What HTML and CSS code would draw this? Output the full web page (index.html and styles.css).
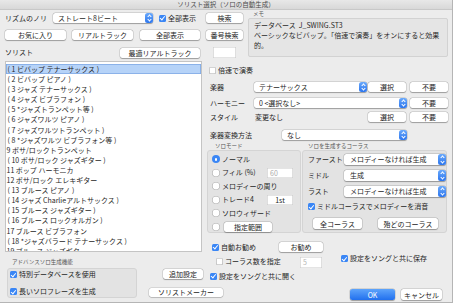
FILE: index.html
```html
<!DOCTYPE html>
<html lang="ja">
<head>
    <meta charset="UTF-8">
    <meta name="viewport" content="width=device-width, initial-scale=1.0">
    <title>ソリスト選択（ソロの自動生成）</title>
    <link rel="stylesheet" href="styles.css">
</head>
<body>
<div class="dlg">
    <div class="titlebar">ソリスト選択（ソロの自動生成）</div>

    <div class="top">
        <div class="top-left">
            <div class="row r1">
                <span class="rhythm-lbl">リズムのノリ</span>
                <div class="sel rhythm-sel"><span>ストレート8ビート</span><i class="step"></i></div>
                <label class="chk all-chk"><i class="cb on"></i>全部表示</label>
                <button class="btn b-search">検索</button>
            </div>
            <div class="row r2">
                <button class="btn b-fav">お気に入り</button>
                <button class="btn b-rt">リアルトラック</button>
                <button class="btn b-all">全部表示</button>
                <button class="btn b-num">番号検索</button>
            </div>
            <div class="row r3">
                <span class="soloist-lbl">ソリスト</span>
                <button class="btn b-best">最適リアルトラック</button>
                <span class="fld num-fld"></span>
            </div>
        </div>
        <div class="memo">
            <div class="small-lbl">メモ</div>
            <div class="memo-box">データベース&nbsp;&nbsp;J_SWING.ST3<br>ベーシックなビバップ。「倍速で演奏」をオンにすると効果<br>的。</div>
        </div>
    </div>

    <div class="mid">
        <ul class="list">
            <li class="p on">( 1 ビバップ テナーサックス )</li>
            <li class="p">( 2 ビバップ ピアノ )</li>
            <li class="p">( 3 ジャズ テナーサックス )</li>
            <li class="p">( 4 ジャズ ビブラフォン )</li>
            <li class="p">( 5 *ジャズトランペット等 )</li>
            <li class="p">( 6 ジャズワルツ ピアノ )</li>
            <li class="p">( 7 ジャズワルツトランペット )</li>
            <li class="p">( 8 *ジャズワルツ ビブラフォン等 )</li>
            <li>9 ボサ/ロックトランペット</li>
            <li class="p">( 10 ボサ/ロック ジャズギター )</li>
            <li>11 ポップ ハーモニカ</li>
            <li>12 ボサ/ロック エレキギター</li>
            <li class="p">( 13 ブルース ピアノ )</li>
            <li class="p">( 14 ジャズ Charlieアルトサックス )</li>
            <li class="p">( 15 ブルース ジャズギター )</li>
            <li class="p">( 16 ブルース ロックオルガン )</li>
            <li>17 ブルース ビブラフォン</li>
            <li class="p">( 18 *ジャズバラード テナーサックス )</li>
            <li>19 ブルース ジャズギター</li>
        </ul>

        <div class="rp">
            <label class="chk dbl"><i class="cb"></i>倍速で演奏</label>

            <div class="frow inst">
                <span class="flbl">楽器</span>
                <div class="sel inst-sel"><span>テナーサックス</span><i class="step"></i></div>
                <button class="btn b-pick">選択</button>
                <button class="btn b-none">不要</button>
            </div>
            <div class="frow harm">
                <span class="flbl">ハーモニー</span>
                <div class="sel harm-sel"><span>0 &lt;選択なし&gt;</span><i class="step"></i></div>
                <button class="btn b-none">不要</button>
            </div>
            <div class="frow style">
                <span class="flbl">スタイル</span>
                <span class="style-val">変更なし</span>
                <button class="btn b-pick">選択</button>
                <button class="btn b-none">不要</button>
            </div>
            <div class="frow conv">
                <span class="flbl conv-lbl">楽器変換方法</span>
                <div class="sel conv-sel"><span>なし</span><i class="step"></i></div>
            </div>

            <div class="grps">
                <div class="g1">
                    <div class="small-lbl glbl">ソロモード</div>
                    <div class="gbox mode-box">
                        <div class="rrow"><i class="rd on"></i>ノーマル</div>
                        <div class="rrow"><i class="rd"></i>フィル (%)<span class="fld fill-fld">60</span></div>
                        <div class="rrow"><i class="rd"></i>メロディーの周り</div>
                        <div class="rrow"><i class="rd"></i>トレード4<span class="fld trade-fld">1st</span></div>
                        <div class="rrow"><i class="rd"></i>ソロウィザード</div>
                        <div class="rrow"><i class="rd"></i><button class="btn b-range">指定範囲</button></div>
                    </div>
                </div>
                <div class="g2">
                    <div class="small-lbl glbl">ソロを生成するコーラス</div>
                    <div class="gbox chorus-box">
                        <div class="crow"><span>ファースト</span><div class="sel"><span>メロディーなければ生成</span><i class="step"></i></div></div>
                        <div class="crow"><span>ミドル</span><div class="sel"><span>生成</span><i class="step"></i></div></div>
                        <div class="crow"><span>ラスト</span><div class="sel"><span>メロディーなければ生成</span><i class="step"></i></div></div>
                        <label class="chk mute"><i class="cb on"></i>ミドルコーラスでメロディーを消音</label>
                        <div class="chorus-btns">
                            <button class="btn b-allc">全コーラス</button>
                            <button class="btn b-most">殆どのコーラス</button>
                        </div>
                    </div>
                </div>
            </div>

            <div class="auto">
                <label class="chk auto-chk"><i class="cb on"></i>自動お勧め</label>
                <button class="btn b-rec">お勧め</button>
            </div>
        </div>
    </div>

    <div class="bot">
        <div class="small-lbl adv-lbl">アドバンスソロ生成機能</div>
        <div class="gbox adv">
            <label class="chk"><i class="cb on"></i>特別データベースを使用</label>
            <label class="chk"><i class="cb on"></i>長いソロフレーズを生成</label>
        </div>
        <button class="btn b-more">追加設定</button>
        <button class="btn b-maker">ソリストメーカー</button>
        <div class="cnt">
            <label class="chk cnt-chk"><i class="cb"></i>コーラス数を指定</label>
            <span class="fld cnt-fld">5</span>
        </div>
        <label class="chk open">
            <i class="cb on"></i>設定をソングと共に開く</label>
        <label class="chk save"><i class="cb on"></i>設定をソングと共に保存</label>
        <div class="ok-row">
            <button class="btn ok">OK</button>
            <button class="btn b-cancel">キャンセル</button>
        </div>
    </div>
</div>
</body>
</html>
```

FILE: styles.css
```css
* {
    box-sizing: border-box;
}
body {
    margin: 0;
    background: #fff;
    font-family: "Noto Sans CJK JP", sans-serif;
    font-size: 7px;
    line-height: 9px;
    color: #1e1e1e;
}
.dlg {
    width: 453px;
    height: 303px;
    background: #ececec;
    border-right: 1px solid #b5b5b5;
    border-bottom: 1px solid #b5b5b5;
    overflow: hidden;
}
.titlebar {
    height: 10px;
    line-height: 8px;
    font-size: 6.5px;
    text-align: center;
    color: #4a4a4a;
    background: linear-gradient(#e8e8e8, #d8d8d8);
    border-bottom: 1px solid #c8c8c8;
}
.small-lbl {
    font-size: 5.5px;
    color: #555;
}

/* controls */
.btn {
    font: inherit;
    color: #222;
    background: #fff;
    border: 0;
    padding: 0;
    height: 10px;
    line-height: 10px;
    text-align: center;
    white-space: nowrap;
    border-radius: 2.5px;
    box-shadow: 0 0 0 0.5px rgba(0, 0, 0, 0.16), 0 0.5px 1px rgba(0, 0, 0, 0.28);
}
.sel {
    display: flex;
    align-items: center;
    height: 10px;
    padding-left: 5px;
    background: #fff;
    border-radius: 2.5px;
    box-shadow: 0 0 0 0.5px rgba(0, 0, 0, 0.16), 0 0.5px 1px rgba(0, 0, 0, 0.28);
}
.sel span {
    flex: 1;
    white-space: nowrap;
    overflow: hidden;
}
.step {
    position: relative;
    flex: none;
    width: 8px;
    height: 100%;
    border-radius: 2.5px;
    background: linear-gradient(#6aa9fb, #2c76ee);
}
.step::before,
.step::after {
    content: "";
    position: absolute;
    left: 3px;
    width: 2px;
    height: 2px;
    border: solid #fff;
    border-width: 0.8px 0 0 0.8px;
}
.step::before {
    top: 2.4px;
    transform: rotate(45deg);
}
.step::after {
    bottom: 2.4px;
    transform: rotate(225deg);
}
.chk {
    display: flex;
    align-items: center;
    height: 9px;
    white-space: nowrap;
}
.cb {
    position: relative;
    flex: none;
    width: 7px;
    height: 7px;
    margin-right: 2px;
    border-radius: 1.5px;
    background: #fff;
    box-shadow: inset 0 0 0 0.6px #a8a8a8;
}
.cb.on {
    background: #3a86f5;
    box-shadow: none;
}
.cb.on::after {
    content: "";
    position: absolute;
    left: 2.3px;
    top: 0.7px;
    width: 1.8px;
    height: 3.8px;
    border: solid #fff;
    border-width: 0 1.1px 1.1px 0;
    transform: rotate(40deg);
}
.rd {
    position: relative;
    flex: none;
    width: 8px;
    height: 8px;
    margin-right: 2px;
    border-radius: 50%;
    background: #fff;
    box-shadow: inset 0 0 0 0.6px #a8a8a8;
}
.rd.on {
    background: #3a86f5;
    box-shadow: none;
}
.rd.on::after {
    content: "";
    position: absolute;
    left: 2.75px;
    top: 2.75px;
    width: 2.5px;
    height: 2.5px;
    border-radius: 50%;
    background: #fff;
}
.fld {
    display: block;
    background: #fff;
    box-shadow: inset 0 0 0 0.6px #c9c9c9;
    line-height: 10px;
}
.gbox {
    background: #e3e3e3;
    border: 1px solid #d4d4d4;
    border-radius: 3px;
}

/* top band */
.top {
    display: flex;
    height: 48px;
}
.top-left {
    width: 243px;
    padding: 3px 0 0 5px;
}
.row {
    display: flex;
    align-items: center;
    height: 10px;
}
.r2,
.r3 {
    margin-top: 7px;
}
.r3 {
    height: 11px;
}
.rhythm-lbl {
    width: 48px;
}
.rhythm-sel {
    width: 100px;
}
.all-chk {
    margin-left: 6px;
}
.b-search {
    width: 37px;
    margin-left: auto;
}
.b-fav { width: 61px; }
.b-rt { width: 61px; margin-left: 6px; }
.b-all { width: 60px; margin-left: 7px; }
.b-num { width: 37px; margin-left: 6px; }
.soloist-lbl {
    flex: 1;
}
.b-best {
    width: 80px;
}
.num-fld {
    width: 23px;
    height: 11px;
    margin: 0 7px 0 13px;
}
.memo {
    width: 200px;
    margin-left: 5px;
}
.memo .small-lbl {
    height: 8px;
    line-height: 8px;
    padding-left: 5px;
}
.memo-box {
    height: 39px;
    padding: 1px 3px 0 5px;
    line-height: 10px;
    background: #e5e5e5;
    border: 1px solid #d2d2d2;
    border-radius: 2px;
    color: #2a2a2a;
}

/* list + right panel */
.mid {
    display: flex;
    height: 191px;
    margin-top: 3px;
    padding-left: 5px;
}
.list {
    width: 197px;
    height: 191px;
    margin: 0;
    padding: 2px 0 0;
    list-style: none;
    background: #fff;
    border: 1px solid #c4c4c4;
    overflow: hidden;
}
.list li {
    height: 10.1px;
    line-height: 10px;
    padding-left: 0.5px;
    white-space: nowrap;
}
.list li.p {
    padding-left: 1.5px;
}
.list li.on {
    background: #b6d3f8;
    box-shadow: inset 0 0 0 0.8px #7ea8e4;
}
.rp {
    width: 243px;
    margin-left: 5px;
}
.dbl {
    height: 10px;
    margin-top: 4px;
    padding-left: 2px;
}
.frow {
    display: grid;
    grid-template-columns: 47px 114px 42px 38px;
    align-items: center;
    height: 10px;
}
.flbl {
    padding-left: 3px;
    white-space: nowrap;
}
.inst { margin-top: 7px; }
.harm { margin-top: 6px; }
.style { margin-top: 4px; }
.conv { margin-top: 8px; }
.inst-sel { width: 113px; }
.harm-sel {
    grid-column: 2 / 4;
    width: 153px;
}
.harm .b-none {
    grid-column: 4;
}
.style-val {
    padding-left: 1px;
}
.conv-lbl {
    overflow: visible;
}
.conv-sel {
    grid-column: 2 / 5;
    width: 125px;
    margin-left: 28px;
}
.b-pick {
    width: 38px;
}
.b-none {
    width: 38px;
}

.grps {
    display: flex;
    gap: 1px;
    margin-top: 3px;
}
.glbl {
    height: 7px;
    line-height: 7px;
}
.g1 { width: 94px; }
.g1 .glbl { padding-left: 8px; }
.g2 { width: 145px; }
.g2 .glbl { padding-left: 6px; }
.mode-box,
.chorus-box {
    height: 83px;
}
.mode-box {
    padding: 1.5px 7px 0 4px;
}
.rrow {
    display: flex;
    align-items: center;
    height: 13.5px;
    white-space: nowrap;
}
.fill-fld,
.trade-fld {
    width: 26px;
    height: 10px;
    margin-left: auto;
    padding-left: 3px;
}
.fill-fld {
    color: #ababab;
}
.trade-fld {
    text-align: center;
    padding-left: 0;
}
.b-range {
    width: 48px;
    margin-left: 2px;
}
.chorus-box {
    padding: 3px 0 0 5px;
}
.crow {
    display: grid;
    grid-template-columns: 36px 102px;
    align-items: center;
    height: 11px;
    margin-bottom: 5px;
    white-space: nowrap;
}
.crow .sel {
    height: 11px;
    padding-left: 6px;
}
.mute {
    margin-top: 0.5px;
}
.chorus-btns {
    display: flex;
    margin-top: 7px;
    padding-left: 5px;
}
.b-allc { width: 49px; height: 11px; }
.b-most { width: 60px; height: 11px; margin-left: 16px; }
.auto {
    display: flex;
    align-items: center;
    height: 10px;
    margin-top: 9px;
}
.auto-chk {
    width: 72px;
    padding-left: 5px;
}
.b-rec {
    width: 44px;
}

/* bottom band */
.bot {
    display: grid;
    grid-template-columns: 145px 63px 132px 1fr;
    grid-template-rows: 16px 16px 1fr;
    height: 50px;
}
.adv-lbl {
    grid-column: 1;
    grid-row: 1;
    align-self: end;
    margin-bottom: 2px;
    padding-left: 12px;
    line-height: 7px;
}
.adv {
    grid-column: 1;
    grid-row: 2 / 4;
    align-self: start;
    width: 130px;
    height: 30px;
    margin-left: 7px;
    padding: 1px 0 0 2px;
}
.adv .chk + .chk {
    margin-top: 8px;
}
.b-more {
    grid-column: 2;
    grid-row: 2;
    align-self: start;
    width: 40px;
    margin: 1px 0 0 18px;
}
.b-maker {
    grid-column: 2 / 4;
    grid-row: 3;
    align-self: start;
    width: 74px;
    height: 9px;
    line-height: 9px;
    margin: 4px 0 0 4px;
}
.cnt {
    grid-column: 3;
    grid-row: 1;
    display: flex;
    align-items: flex-start;
    margin-top: 5px;
    padding-left: 8px;
}
.cnt-chk {
    width: 84px;
}
.cnt-fld {
    width: 22px;
    height: 11px;
    padding-left: 3px;
    color: #b5b5b5;
}
.open {
    grid-column: 3;
    grid-row: 2;
    align-self: center;
    padding-left: 2px;
}
.save {
    grid-column: 4;
    grid-row: 1;
    align-self: start;
    margin-top: 2px;
    padding-left: 1px;
}
.ok-row {
    grid-column: 4;
    grid-row: 3;
    display: flex;
    margin-top: 5px;
    padding-left: 10px;
}
.ok {
    width: 45px;
    height: 11px;
    color: #fff;
    background: linear-gradient(#5ea4fb, #2170ee);
}
.b-cancel {
    width: 41px;
    height: 11px;
    margin-left: 6px;
}
```
